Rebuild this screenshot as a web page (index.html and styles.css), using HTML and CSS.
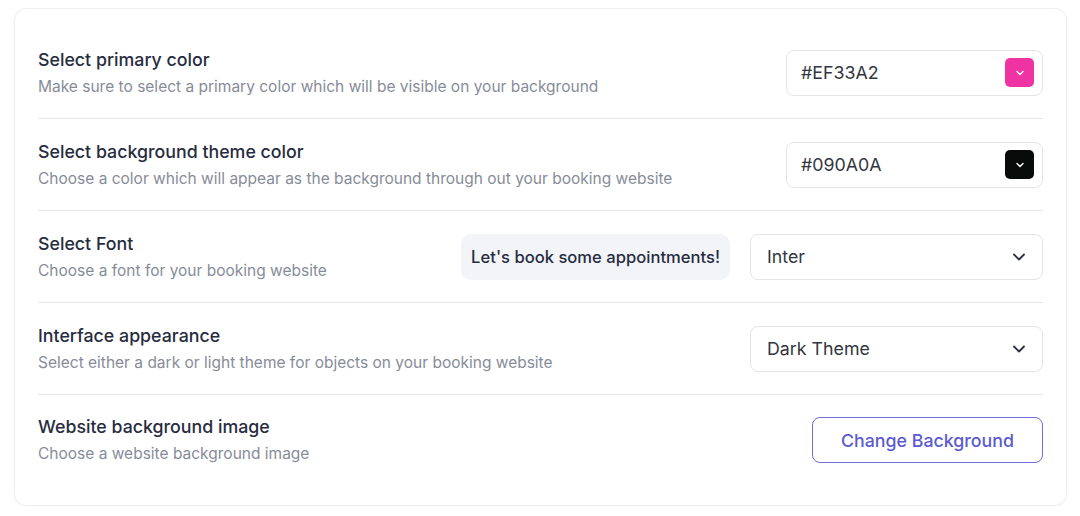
FILE: index.html
```html
<!DOCTYPE html>
<html lang="en">
<head>
  <meta charset="UTF-8">
  <title>Website appearance</title>
  <link rel="stylesheet" href="styles.css">
</head>
<body>
  <div class="card">
    <div class="row">
      <div class="info">
        <div class="title">Select primary color</div>
        <div class="desc">Make sure to select a primary color which will be visible on your background</div>
      </div>
      <div class="color-input">
        <span>#EF33A2</span>
        <span class="swatch pink">
          <svg width="14" height="14" viewBox="0 0 14 14"><path d="M4 5.5l3 3 3-3" fill="none" stroke="#fff" stroke-width="1.4" stroke-linecap="round" stroke-linejoin="round"/></svg>
        </span>
      </div>
    </div>

    <div class="row">
      <div class="info">
        <div class="title">Select background theme color</div>
        <div class="desc">Choose a color which will appear as the background through out your booking website</div>
      </div>
      <div class="color-input">
        <span>#090A0A</span>
        <span class="swatch black">
          <svg width="14" height="14" viewBox="0 0 14 14"><path d="M4 5.5l3 3 3-3" fill="none" stroke="#fff" stroke-width="1.4" stroke-linecap="round" stroke-linejoin="round"/></svg>
        </span>
      </div>
    </div>

    <div class="row">
      <div class="info">
        <div class="title">Select Font</div>
        <div class="desc">Choose a font for your booking website</div>
      </div>
      <div class="controls">
        <div class="preview">Let's book some appointments!</div>
        <div class="select">
          <span>Inter</span>
          <svg width="18" height="18" viewBox="0 0 18 18"><path d="M4 6.5l5 5 5-5" fill="none" stroke="#2a2f45" stroke-width="1.8" stroke-linecap="round" stroke-linejoin="round"/></svg>
        </div>
      </div>
    </div>

    <div class="row">
      <div class="info">
        <div class="title">Interface appearance</div>
        <div class="desc">Select either a dark or light theme for objects on your booking website</div>
      </div>
      <div class="select">
        <span>Dark Theme</span>
        <svg width="18" height="18" viewBox="0 0 18 18"><path d="M4 6.5l5 5 5-5" fill="none" stroke="#2a2f45" stroke-width="1.8" stroke-linecap="round" stroke-linejoin="round"/></svg>
      </div>
    </div>

    <div class="row">
      <div class="info">
        <div class="title">Website background image</div>
        <div class="desc">Choose a website background image</div>
      </div>
      <button class="outline-btn">Change Background</button>
    </div>
  </div>
</body>
</html>
```

FILE: styles.css
```css
body {
  margin: 0;
  background: #ffffff;
  font-family: 'Inter', 'Noto Sans', sans-serif;
  color: #2a2f45;
}
.card {
  margin: 8px 0 0 14px;
  width: 1005px;
  padding: 18px 23px 20px 23px;
  border: 1px solid #eceef1;
  border-radius: 12px;
  box-shadow: 0 1px 3px #0000000a;
}
.row {
  display: flex;
  align-items: center;
  justify-content: space-between;
  height: 91px;
  border-bottom: 1px solid #e6e8ec;
}
.row:last-child {
  height: 90px;
  border-bottom: none;
}
.title {
  font-size: 17.8px;
  font-weight: 500;
  color: #272c40;
  line-height: 24px;
}
.desc {
  font-size: 15.5px;
  color: #878c99;
  line-height: 22px;
  margin-top: 4px;
}
.color-input {
  box-sizing: border-box;
  width: 257px;
  height: 46px;
  border: 1px solid #e2e4e8;
  border-radius: 8px;
  display: flex;
  align-items: center;
  justify-content: space-between;
  padding: 0 8px 0 14px;
  font-size: 17.8px;
  color: #333640;
}
.swatch {
  width: 29px;
  height: 29px;
  border-radius: 5px;
  display: flex;
  align-items: center;
  justify-content: center;
}
.swatch.pink {
  background: #ef33a2;
}
.swatch.black {
  background: #090a0a;
}
.controls {
  display: flex;
  align-items: center;
  gap: 20px;
}
.preview {
  background: #f3f4f7;
  border-radius: 10px;
  height: 46px;
  box-sizing: border-box;
  padding: 0 10px;
  display: flex;
  align-items: center;
  font-size: 16.6px;
  font-weight: 500;
  color: #272c40;
}
.select {
  box-sizing: border-box;
  width: 293px;
  height: 46px;
  border: 1px solid #e2e4e8;
  border-radius: 8px;
  display: flex;
  align-items: center;
  justify-content: space-between;
  padding: 0 14px 0 16px;
  font-size: 17.8px;
  color: #333640;
}
.outline-btn {
  width: 231px;
  height: 46px;
  background: #ffffff;
  border: 1.5px solid #6f6fd8;
  border-radius: 8px;
  font-family: 'Inter', 'Noto Sans', sans-serif;
  font-size: 17.8px;
  font-weight: 500;
  color: #5b5bd0;
}
```
